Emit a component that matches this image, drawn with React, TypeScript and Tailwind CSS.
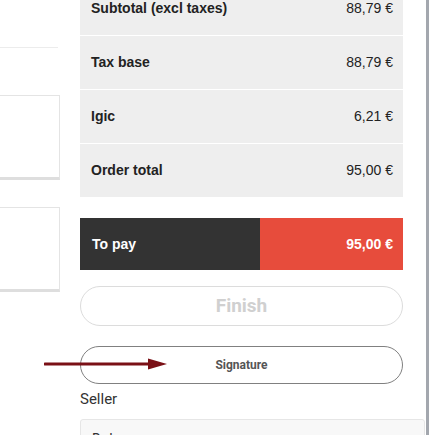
import React from "react";

const rows = [
  { label: "Subtotal (excl taxes)", value: "88,79 €" },
  { label: "Tax base", value: "88,79 €" },
  { label: "Igic", value: "6,21 €" },
  { label: "Order total", value: "95,00 €" },
];

const Arrow = () => (
  <svg
    className="absolute left-[44px] top-[357px]"
    width="124"
    height="14"
    viewBox="0 0 124 14"
  >
    <line x1="1" y1="7" x2="108" y2="7" stroke="#7a1016" strokeWidth="3" strokeLinecap="round" />
    <polygon points="104,1.5 123,7 104,12.5" fill="#7a1016" />
  </svg>
);

export default function App() {
  return (
    <div className="relative flex h-[435px] w-[432px] items-start overflow-hidden bg-white font-['Liberation_Sans',Arial,sans-serif]">
      {/* left column, mostly off screen */}
      <div className="flex w-[60px] shrink-0 flex-col">
        <div className="mt-[47px] h-px w-[58px] shrink-0 bg-[#ececec]" />
        <div className="mt-[47px] h-[85px] shrink-0 border border-l-0 border-b-[3px] border-[#e4e4e4] border-b-[#dedede] bg-white" />
        <div className="mt-[27px] h-[85px] shrink-0 border border-l-0 border-b-[3px] border-[#e4e4e4] border-b-[#dedede] bg-white" />
      </div>

      {/* right column */}
      <div className="ml-[20px] flex w-[345px] shrink-0 flex-col">
        <div className="-mt-[18px] flex w-[323px] shrink-0 flex-col gap-px bg-white">
          {rows.map((r) => (
            <div
              key={r.label}
              className="flex h-[53px] shrink-0 items-center justify-between bg-[#eeeeee] pl-[11px] pr-[10px] text-[14px] text-[#222]"
            >
              <span className="font-bold">{r.label}</span>
              <span>{r.value}</span>
            </div>
          ))}
        </div>

        <div className="mt-[21px] flex h-[52px] w-[323px] shrink-0 text-[14px] font-bold text-white">
          <div className="flex w-[180px] items-center bg-[#333333] pl-[12px]">To pay</div>
          <div className="flex flex-1 items-center justify-end bg-[#e74c3c] pr-[10px]">95,00 €</div>
        </div>

        <button className="mt-[16px] flex h-[40px] w-[323px] shrink-0 items-center justify-center rounded-full border border-[#dcdcdc] bg-white font-['Roboto',sans-serif] text-[19px] font-bold text-[#d0d0d0]">
          Finish
        </button>

        <button className="mt-[20px] flex h-[38px] w-[323px] shrink-0 items-center justify-center rounded-full border border-[#808080] bg-white font-['Roboto',sans-serif] text-[12px] font-bold text-[#555]">
          Signature
        </button>

        <div className="mt-[6px] shrink-0 font-['Roboto',sans-serif] text-[15px] leading-[18px] text-[#333]">Seller</div>

        <div className="mt-[11px] h-[40px] w-[345px] shrink-0 rounded-[3px] border border-[#e6e6e6] bg-[#f8f8f8] pl-[11px] pt-[10px] font-['Roboto',sans-serif] text-[14px] leading-[18px] text-[#333]">
          Dolores
        </div>
      </div>

      {/* scrollbar edge */}
      <div className="ml-[1px] h-full w-[3px] shrink-0 bg-[#a3a7ae]" />

      <Arrow />
    </div>
  );
}
